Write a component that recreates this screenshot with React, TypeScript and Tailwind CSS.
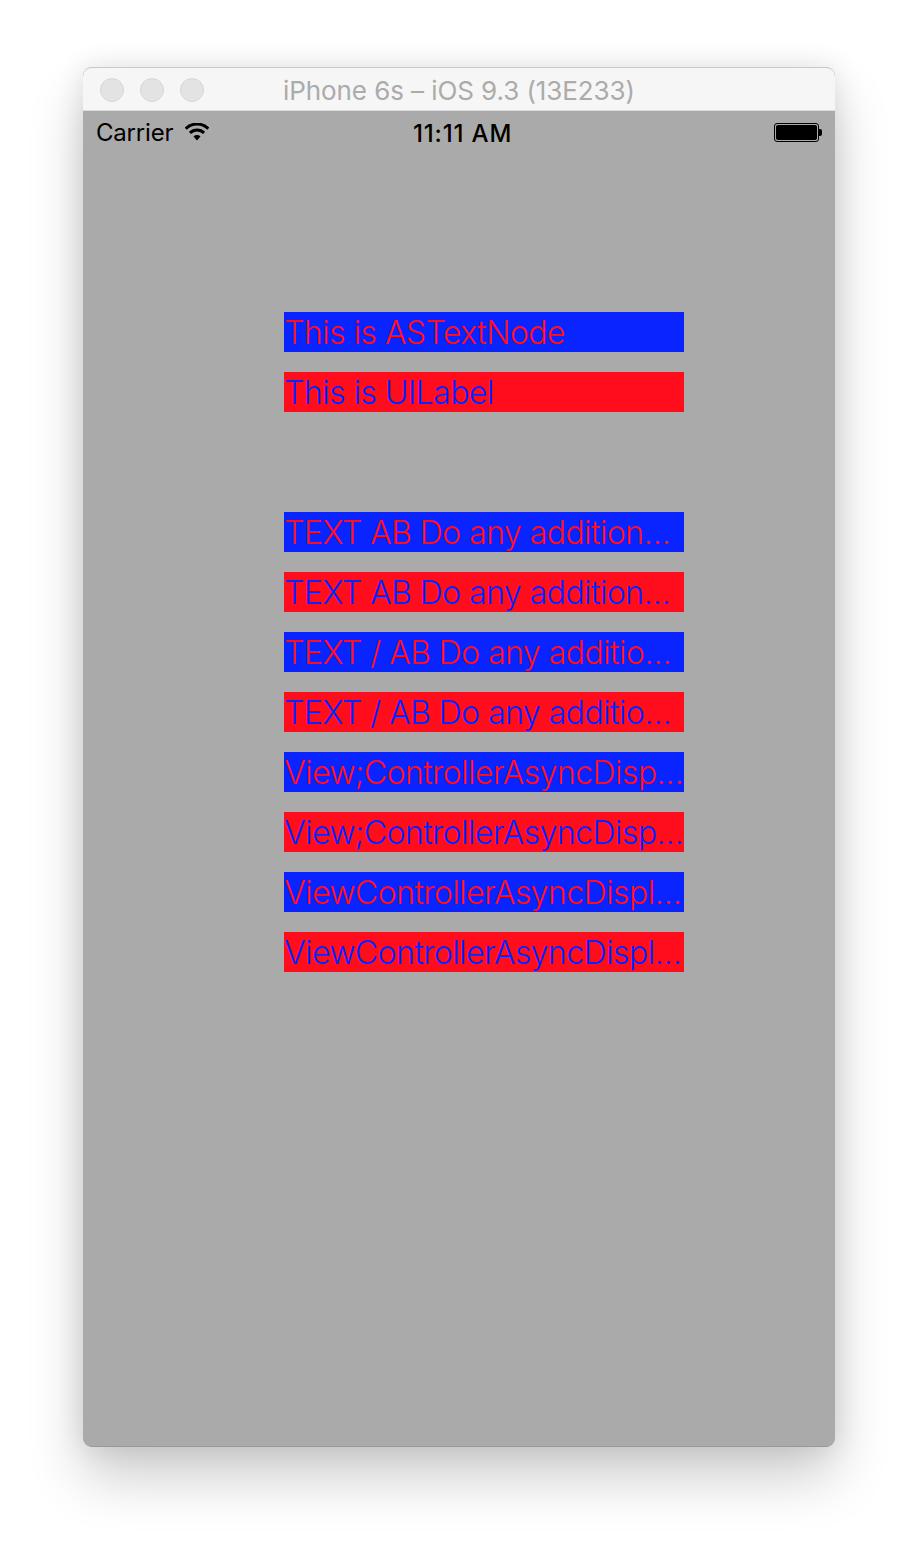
import React from 'react'

const ROWS = [
  'TEXT AB Do any addition…',
  'TEXT / AB Do any additio…',
  'View;ControllerAsyncDisp…',
  'ViewControllerAsyncDispl…',
]

function Bar({ text, tone }: { text: string; tone: 'blue' | 'red' }) {
  const color =
    tone === 'blue' ? 'bg-[#0a24ff] text-[#ff0d1c]' : 'bg-[#ff0d1c] text-[#0a24ff]'
  return (
    <div
      className={`h-10 w-[400px] overflow-hidden whitespace-nowrap pt-px text-[32px] leading-10 font-[350] tracking-[-0.55px] ${color}`}
    >
      {text}
    </div>
  )
}

function Wifi() {
  return (
    <svg width="24" height="18" viewBox="0 0 24 18" className="ml-3 mb-0.5" fill="none" stroke="#000" strokeWidth="3">
      <path d="M0.700 5.700A16 16 0 0 1 23.300 5.700" />
      <path d="M4.900 9.900A10 10 0 0 1 19.100 9.900" />
      <path d="M12 17.500 8.500 13.500A5 5 0 0 1 15.500 13.500Z" fill="#000" stroke="none" />
    </svg>
  )
}

function Battery() {
  return (
    <div className="mb-0.5 flex items-center">
      <div className="h-[19px] w-[45px] rounded-[3px] border border-black p-px">
        <div className="h-full w-full rounded-[2px] bg-black" />
      </div>
      <div className="h-[7px] w-[3px] rounded-r-[2px] bg-black" />
    </div>
  )
}

export default function App() {
  return (
    <div className="h-[1546px] w-[918px] overflow-hidden bg-white pt-[67px] pl-[83px] font-['Inter',sans-serif]">
      <div className="flex h-[1380px] w-[752px] flex-col overflow-hidden rounded-[9px] border-b border-b-[#989898] bg-[#aaaaaa] shadow-[0_30px_55px_rgba(0,0,0,0.2),0_0_28px_rgba(0,0,0,0.1)]">
        <div className="relative flex h-11 shrink-0 items-center justify-center rounded-t-[9px] border-t border-b border-t-[#c9c9c9] border-b-[#dcdcdc] bg-[#f6f6f6]">
          <div className="absolute top-[10px] left-[17px] flex gap-4">
            <span className="h-6 w-6 rounded-full border border-[#d6d6d6] bg-[#e3e3e3]" />
            <span className="h-6 w-6 rounded-full border border-[#d6d6d6] bg-[#e3e3e3]" />
            <span className="h-6 w-6 rounded-full border border-[#d6d6d6] bg-[#e3e3e3]" />
          </div>
          <span className="pt-0.5 text-[26px] tracking-[-0.08px] text-[#ababab]">iPhone 6s – iOS 9.3 (13E233)</span>
        </div>
        <div className="relative flex h-11 shrink-0 items-center pr-[13px] pl-[13px] text-[24px] text-black">
          <span className="tracking-[-0.2px]">Carrier</span>
          <Wifi />
          <span className="absolute top-[5px] left-[330px] font-medium tracking-[0.85px]">11:11 AM</span>
          <div className="ml-auto">
            <Battery />
          </div>
        </div>
        <div className="mt-[157px] ml-[201px] flex flex-col gap-5">
          <Bar text="This is ASTextNode" tone="blue" />
          <Bar text="This is UILabel" tone="red" />
          <div className="h-[60px]" />
          {ROWS.map((text) => (
            <React.Fragment key={text}>
              <Bar text={text} tone="blue" />
              <Bar text={text} tone="red" />
            </React.Fragment>
          ))}
        </div>
      </div>
    </div>
  )
}
